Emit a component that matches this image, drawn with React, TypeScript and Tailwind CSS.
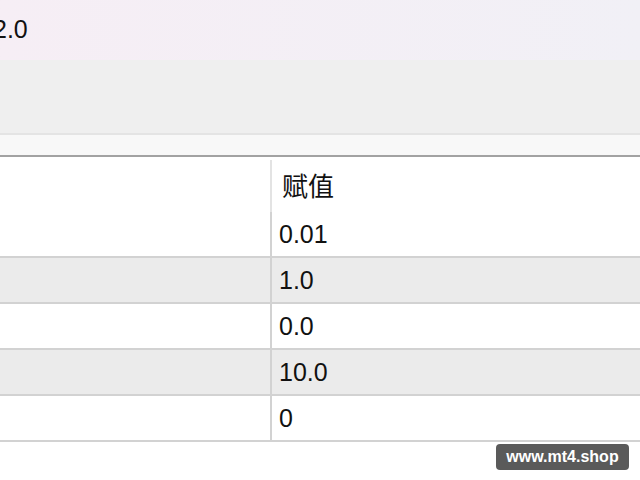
const rows = [
  { value: "0.01", shade: false },
  { value: "1.0", shade: true },
  { value: "0.0", shade: false },
  { value: "10.0", shade: true },
  { value: "0", shade: false },
]

export default function App() {
  return (
    <div
      className="relative h-[480px] w-[640px] overflow-hidden bg-white text-[#111]"
      style={{ fontFamily: '"Liberation Sans", "Noto Sans CJK SC", sans-serif' }}
    >
      {/* Title strip, value scrolled partly out of view */}
      <div className="flex h-[60px] items-center bg-gradient-to-r from-[#f6eef5] to-[#f1f0f6] pb-[2px]">
        <span className="-ml-[7px] text-[25px] leading-none">2.0</span>
      </div>
      <div className="h-[73px] bg-[#efefef]" />
      <div className="h-[2px] bg-[#e4e4e4]" />
      <div className="h-[20px] bg-[#f8f8f8]" />
      <div className="h-[2px] bg-[#a2a2a2]" />

      {/* Table */}
      <div className="flex h-[55px]">
        <div className="w-[270px]" />
        <div className="mt-[3px] w-[2px] bg-[#e3e3e3]" />
        <div className="flex items-center pl-[10px] pt-[4px] text-[26px] leading-none">赋值</div>
      </div>
      {rows.map((r, i) => (
        <div
          key={i}
          className={`flex h-[46px] border-b-2 border-[#d2d2d2] ${r.shade ? "bg-[#ebebeb]" : "bg-white"}`}
        >
          <div className="w-[270px]" />
          <div className="w-[2px] bg-[#d2d2d2]" />
          <div className="flex items-center pl-[7px] text-[25px] leading-none">{r.value}</div>
        </div>
      ))}

      {/* Watermark */}
      <div className="absolute left-[496px] top-[444px] flex h-[26px] w-[133px] items-center justify-center rounded-[4px] bg-[#5a5a5a] text-[16px] font-bold leading-none text-white">
        www.mt4.shop
      </div>
    </div>
  )
}
